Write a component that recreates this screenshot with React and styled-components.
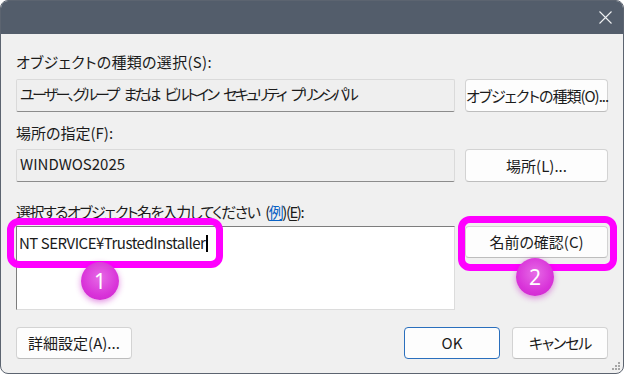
import React from "react";
import styled, { createGlobalStyle } from "styled-components";

const Global = createGlobalStyle`
  html, body { margin: 0; padding: 0; background: #ffffff; }
  body {
    font-family: "Noto Sans CJK JP", "Noto Sans", sans-serif;
    font-feature-settings: "palt" 1;
    color: #1b1b1b;
  }
`;

const Window = styled.div`
  position: relative;
  width: 624px;
  height: 374px;
  box-sizing: border-box;
  border: 1px solid #5c6470;
  border-radius: 8px;
  overflow: hidden;
  background: #f0f0f0;
  display: flex;
  flex-direction: column;
`;

const TitleBar = styled.div`
  height: 33px;
  background: #535d6b;
  display: flex;
  align-items: center;
  justify-content: flex-end;
  padding-right: 11px;
  flex-shrink: 0;
`;

const Content = styled.div`
  display: flex;
  flex-direction: column;
  padding: 18px 15px 0 15px;
`;

const Group = styled.div`
  display: flex;
  flex-direction: column;
  gap: ${(p) => p.$gap}px;
  margin-top: ${(p) => p.$mt || 0}px;
`;

const Label = styled.div`
  font-size: 15px;
  line-height: 20px;
  height: 20px;
  white-space: pre;
  letter-spacing: ${(p) => p.$ls || 0}px;
  word-spacing: ${(p) => p.$ws || 0}px;
`;

const U = styled.span`
  text-decoration: underline;
  text-underline-offset: 2px;
`;

const Link = styled.span`
  color: #0b63c5;
  text-decoration: underline;
  text-underline-offset: 2px;
`;

const Row = styled.div`
  display: grid;
  grid-template-columns: 1fr 143px;
  column-gap: 10px;
  align-items: start;
`;

const ReadField = styled.div`
  height: 33px;
  box-sizing: border-box;
  background: #efefef;
  border: 1px solid #dadada;
  border-bottom-color: #8c8c8c;
  border-radius: 2px;
  padding: 4px 0 0 3px;
  font-size: 15px;
  line-height: 20px;
  white-space: pre;
  letter-spacing: ${(p) => p.$ls || 0}px;
  word-spacing: ${(p) => p.$ws || 0}px;
`;

const Button = styled.button`
  height: ${(p) => p.$h || 33}px;
  width: ${(p) => (p.$w ? p.$w + "px" : "100%")};
  box-sizing: border-box;
  background: #fdfdfd;
  border: 1px solid ${(p) => (p.$primary ? "#2a6fbd" : "#d3d3d3")};
  border-bottom-color: ${(p) => (p.$primary ? "#2a6fbd" : "#bdbdbd")};
  border-radius: 4px;
  font-family: inherit;
  font-feature-settings: "palt" 1;
  font-size: 15px;
  line-height: 20px;
  letter-spacing: ${(p) => p.$ls || 0}px;
  color: #1b1b1b;
  padding: 0;
  white-space: nowrap;
`;

const ListBox = styled.div`
  height: 84px;
  box-sizing: border-box;
  background: #ffffff;
  border: 1px solid #dcdcdc;
  border-left-color: #7d7d7d;
  border-top-color: #7d7d7d;
  padding: 6px 0 0 2px;
  font-size: 15px;
  line-height: 20px;
  letter-spacing: -0.5px;
  white-space: nowrap;
`;

const Caret = styled.span`
  display: inline-block;
  width: 2px;
  height: 17px;
  background: #000;
  vertical-align: -3px;
  margin-left: 1px;
`;

const BottomRow = styled.div`
  display: flex;
  align-items: center;
  gap: 12px;
  margin-top: 17px;
`;

const Spacer = styled.div`
  flex: 1;
`;

const Highlight = styled.div`
  position: absolute;
  left: ${(p) => p.$x}px;
  top: ${(p) => p.$y}px;
  width: ${(p) => p.$w}px;
  height: ${(p) => p.$h}px;
  box-sizing: border-box;
  border: 7px solid #ff00ff;
  border-radius: 12px;
  pointer-events: none;
`;

const Badge = styled.div`
  position: absolute;
  left: ${(p) => p.$x - 19}px;
  top: ${(p) => p.$y - 19}px;
  width: 38px;
  height: 38px;
  border-radius: 50%;
  background: radial-gradient(circle at 50% 40%, #e66be6 0%, #d934d9 60%, #cc22cc 100%);
  box-shadow: 0 2px 6px rgba(190, 0, 190, 0.45);
  color: #ffffff;
  font-family: "Noto Sans", sans-serif;
  font-size: 21px;
  line-height: 38px;
  text-align: center;
`;

const Grip = styled.svg`
  position: absolute;
  right: 2px;
  bottom: 2px;
`;

function CloseIcon() {
  return (
    <svg width="13" height="13" viewBox="0 0 13 13">
      <path d="M0.5 0.5 L12.5 12.5 M12.5 0.5 L0.5 12.5" stroke="#eef0f2" strokeWidth="1.1" fill="none" />
    </svg>
  );
}

export default function App() {
  const dots = [
    [7, 1],
    [4, 4], [7, 4],
    [1, 7], [4, 7], [7, 7],
  ];
  return (
    <>
      <Global />
      <Window>
        <TitleBar>
          <CloseIcon />
        </TitleBar>
        <Content>
          <Group $gap={7}>
            <Label $ls={0.3}>オブジェクトの種類の選択(S):</Label>
            <Row>
              <ReadField $ls={-2.6} $ws={5}>ユーザー、グループ または ビルトイン セキュリティ プリンシパル</ReadField>
              <Button $ls={-1}>オブジェクトの種類(O)...</Button>
            </Row>
          </Group>
          <Group $gap={6} $mt={11}>
            <Label>場所の指定(F):</Label>
            <Row>
              <ReadField>WINDWOS2025</ReadField>
              <Button>場所(L)...</Button>
            </Row>
          </Group>
          <Group $gap={4} $mt={20}>
            <Label $ls={-1.5} $ws={4}>
              選択するオブジェクト名を入力してください (<Link>例</Link>)(<U>E</U>):
            </Label>
            <Row>
              <ListBox>
                NT SERVICE¥TrustedInstaller
                <Caret />
              </ListBox>
              <Button $h={32}>名前の確認(C)</Button>
            </Row>
          </Group>
          <BottomRow>
            <Button $w={116} $h={32}>詳細設定(A)...</Button>
            <Spacer />
            <Button $w={96} $h={32} $primary>OK</Button>
            <Button $w={96} $h={32} $ls={-1.2}>キャンセル</Button>
          </BottomRow>
        </Content>
        <Highlight $x={6} $y={217} $w={216} $h={50} />
        <Highlight $x={457} $y={215} $w={159} $h={55} />
        <Badge $x={99} $y={280}>1</Badge>
        <Badge $x={534} $y={276}>2</Badge>
        <Grip width="10" height="10" viewBox="0 0 10 10">
          {dots.map(([x, y], i) => (
            <rect key={i} x={x} y={y} width="2" height="2" fill="#a6a6a6" />
          ))}
        </Grip>
      </Window>
    </>
  );
}
